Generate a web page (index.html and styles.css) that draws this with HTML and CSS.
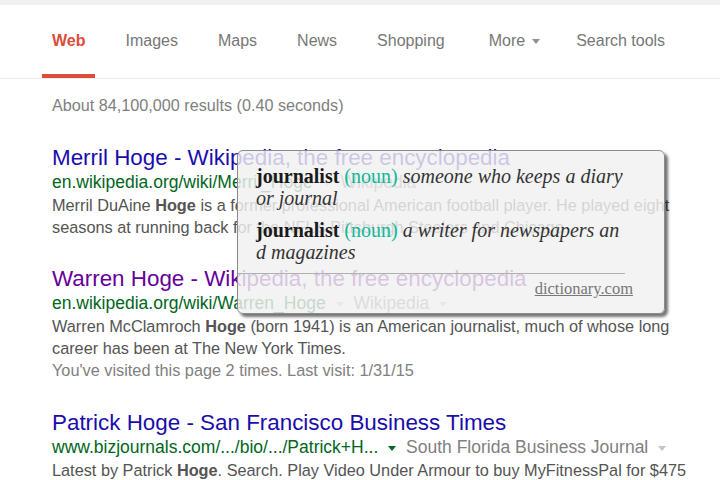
FILE: index.html
```html
<!DOCTYPE html>
<html>
<head>
<meta charset="utf-8">
<link rel="stylesheet" href="styles.css">
</head>
<body>
<div class="topbar"></div>
<nav class="nav">
  <div class="tab active">Web</div>
  <div class="tab">Images</div>
  <div class="tab">Maps</div>
  <div class="tab">News</div>
  <div class="tab">Shopping</div>
  <div class="tab more">More<span class="caret"></span></div>
  <div class="tab tools">Search tools</div>
</nav>
<main class="results">
  <div class="count">About 84,100,000 results (0.40 seconds)</div>

  <div class="result">
    <div class="title">Merril Hoge - Wikipedia, the free encyclopedia</div>
    <div class="url">en.wikipedia.org/wiki/Merril_<b>Hoge</b> <span class="caret"></span> <span class="src">Wikipedia</span> <span class="caret gray"></span></div>
    <div class="snippet">Merril DuAine <b>Hoge</b> is a former professional American football player. He played eight seasons at running back for the NFL's Pittsburgh Steelers and Chicago</div>
  </div>

  <div class="result">
    <div class="title visited">Warren Hoge - Wikipedia, the free encyclopedia</div>
    <div class="url">en.wikipedia.org/wiki/Warren_<b>Hoge</b> <span class="caret"></span> <span class="src">Wikipedia</span> <span class="caret gray"></span></div>
    <div class="snippet">Warren McClamroch <b>Hoge</b> (born 1941) is an American journalist, much of whose long career has been at The New York Times.</div>
    <div class="visit">You've visited this page 2 times. Last visit: 1/31/15</div>
  </div>

  <div class="result last">
    <div class="title">Patrick Hoge - San Francisco Business Times</div>
    <div class="url">www.bizjournals.com/.../bio/.../Patrick+H... <span class="caret green"></span> <span class="src">South Florida Business Journal</span> <span class="caret gray"></span></div>
    <div class="snippet">Latest by Patrick <b>Hoge</b>. Search. Play Video Under Armour to buy MyFitnessPal for $475</div>
  </div>
</main>

<div class="popup">
  <div class="def"><b class="word">journalist</b> <span class="pos">(noun)</span> <i>someone who keeps a diary<br>or journal</i></div>
  <div class="def"><b class="word">journalist</b> <span class="pos">(noun)</span> <i>a writer for newspapers an<br>d magazines</i></div>
  <div class="divider"></div>
  <div class="source"><span>dictionary.com</span></div>
</div>
</body>
</html>
```

FILE: styles.css
```css
html, body {
  margin: 0;
  padding: 0;
  background: #fff;
  font-family: "Liberation Sans", Arial, sans-serif;
  width: 720px;
  height: 480px;
  overflow: hidden;
  position: relative;
}

.topbar {
  height: 5px;
  background: #f1f1f1;
}

.nav {
  display: flex;
  padding-left: 42px;
  gap: 20px;
  border-bottom: 1px solid #ebebeb;
  height: 73px;
}

.tab {
  box-sizing: border-box;
  height: 73px;
  padding: 3px 10px 0;
  display: flex;
  align-items: center;
  font-size: 16px;
  color: #777;
  border-bottom: 4px solid transparent;
}

.tab.active {
  color: #dd4b39;
  font-weight: bold;
  border-bottom-color: #dd4b39;
}

.tab.more {
  margin-left: 4px;
}

.tab.more .caret {
  margin: 0 0 0 7px;
  border-top-color: #909090;
}

.tab.tools {
  margin-left: -4px;
}

.caret {
  display: inline-block;
  width: 0;
  height: 0;
  border-left: 4px solid transparent;
  border-right: 4px solid transparent;
  border-top: 5px solid #c4c4c4;
  vertical-align: middle;
  margin: 0 5px;
}

.caret.green {
  border-top-color: #006621;
}

.caret.gray {
  border-top-color: #c4c4c4;
}

.results {
  padding-left: 52px;
  width: 652px;
}

.count {
  margin-top: 16px;
  font-size: 16.2px;
  line-height: 21px;
  color: #808080;
}

.result {
  margin-top: 30px;
}

.result + .result {
  margin-top: 29px;
}

.result.last {
  margin-top: 30px;
}

.title {
  font-size: 22.4px;
  line-height: 24px;
  color: #1a0dab;
}

.title.visited {
  color: #660099;
}

.url {
  font-size: 17.5px;
  line-height: 24px;
  color: #006621;
}

.url b {
  font-weight: normal;
}

.url .src {
  color: #808080;
}

.snippet {
  font-size: 16.3px;
  line-height: 22px;
  color: #545454;
}

.snippet b {
  color: #545454;
}

.visit {
  font-size: 16.3px;
  line-height: 22px;
  color: #808080;
}

.popup {
  position: absolute;
  left: 237px;
  top: 150px;
  width: 428px;
  height: 164px;
  box-sizing: border-box;
  padding: 14px 18px 0;
  background: rgba(240, 240, 240, 0.82);
  border: 1px solid #8a8a8a;
  border-radius: 6px;
  box-shadow: 3px 3px 3px rgba(0, 0, 0, 0.55);
  font-family: "Liberation Serif", "Times New Roman", serif;
}

.def {
  font-size: 20px;
  line-height: 22px;
  color: #333;
  margin-bottom: 10px;
}

.def .word {
  color: #1a1a1a;
}

.def .pos {
  color: #10b99a;
}

.def i {
  color: #333;
}

.divider {
  margin: 6px 21px 0 -18px;
  border-top: 1px solid #b0b0b0;
}

.source {
  text-align: right;
  padding-right: 13px;
  margin-top: 5px;
  font-size: 16.5px;
  line-height: 20px;
}

.source span {
  color: #777;
  text-decoration: underline;
}
```
